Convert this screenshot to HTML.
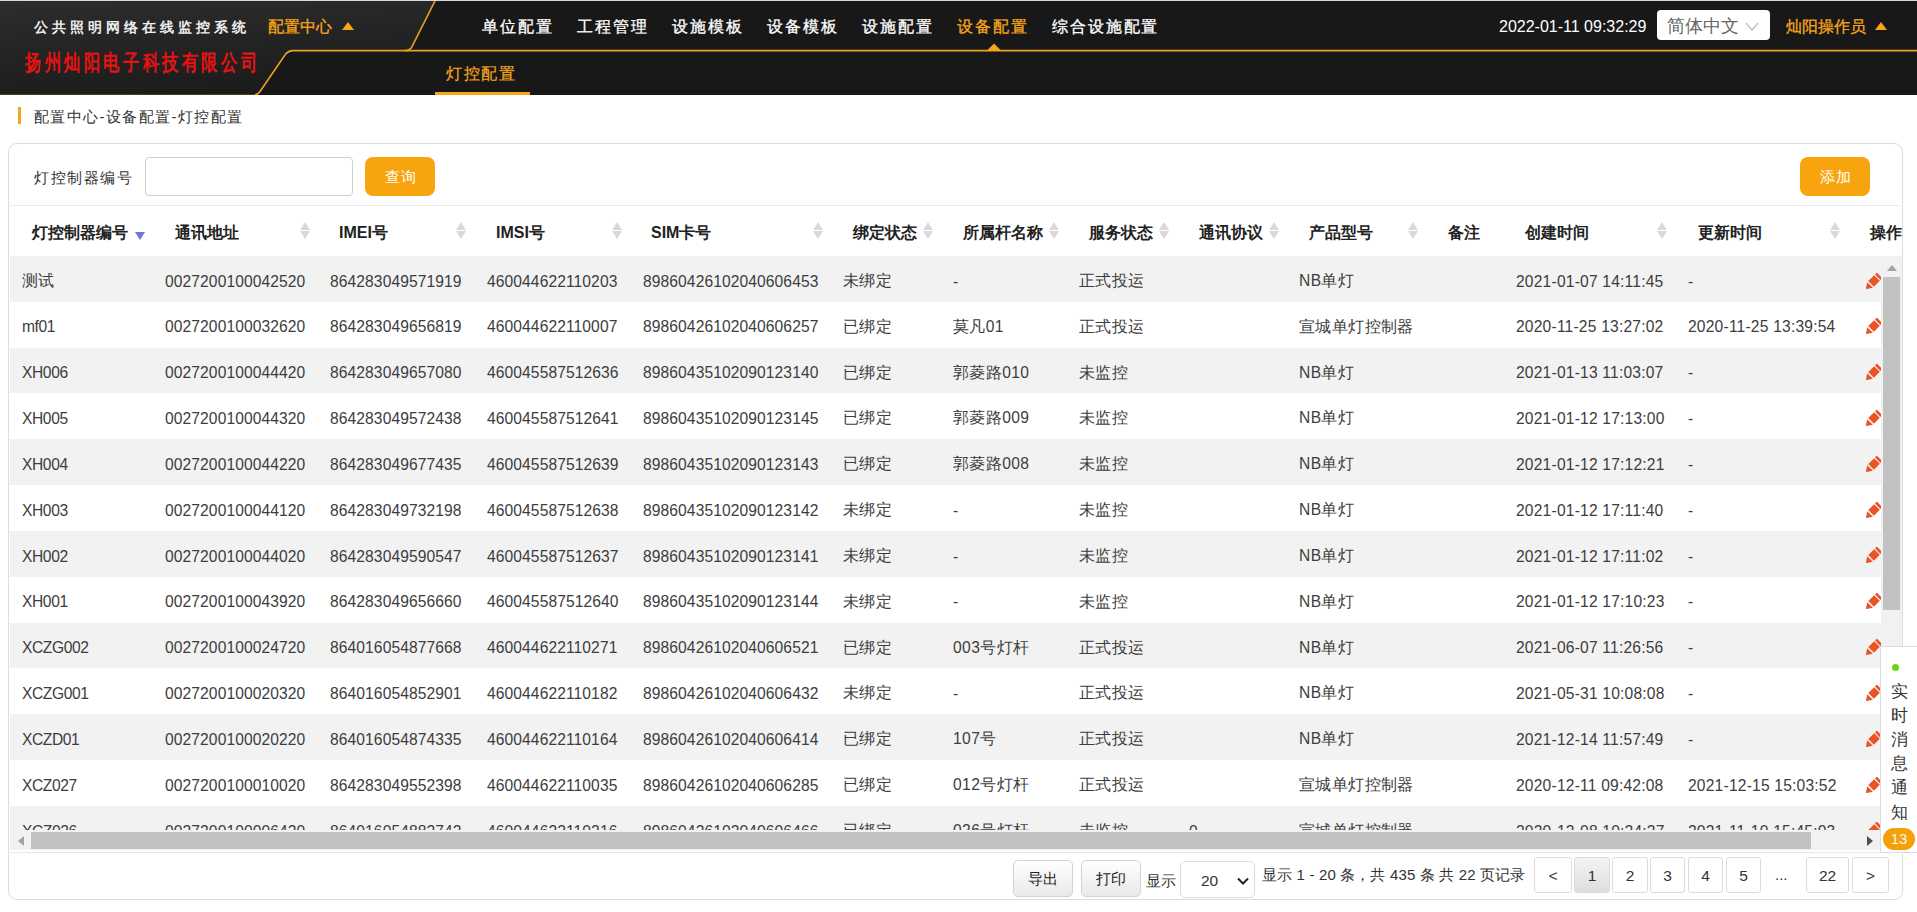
<!DOCTYPE html><html><head><meta charset="utf-8"><style>*{margin:0;padding:0;box-sizing:border-box}
html,body{width:1917px;height:912px;overflow:hidden;background:#fff;font-family:"Liberation Sans",sans-serif;color:#333}
.abs{position:absolute;white-space:nowrap}
#topline{position:absolute;left:0;top:0;width:1917px;height:1px;background:#d9d9d9}
#hdr{position:absolute;left:0;top:1px;width:1917px;height:94px;background:#181818;overflow:hidden}
#hdr svg.bg{position:absolute;left:0;top:0}
.nav{position:absolute;top:15px;font-size:16px;color:#fff;line-height:22px;white-space:nowrap;letter-spacing:1.9px;-webkit-text-stroke:0.3px currentColor}
.nav.on{color:#f7a519}
#title{position:absolute;left:34px;top:17px;font-size:14px;color:#eee;font-weight:bold;letter-spacing:4px;font-family:"Liberation Serif",serif;line-height:20px}
#company{position:absolute;left:25px;top:49px;font-size:16px;color:#e81212;font-weight:bold;letter-spacing:3.6px;font-family:"Liberation Serif",serif;line-height:20px;transform:scaleY(1.35);transform-origin:0 0}
#cfg{position:absolute;left:268px;top:15px;font-size:16px;color:#f7a519;line-height:22px;-webkit-text-stroke:0.3px currentColor}
.tri{position:absolute;width:0;height:0;border-left:6px solid transparent;border-right:6px solid transparent;border-bottom:8px solid #f7a519}
#sub{position:absolute;left:446px;top:62px;font-size:16px;color:#f7a519;line-height:22px;letter-spacing:1.7px;-webkit-text-stroke:0.2px currentColor}
#subbar{position:absolute;left:435px;top:91px;width:95px;height:4px;background:#f7a519}
#clock{position:absolute;left:1499px;top:15px;font-size:16px;color:#fff;line-height:22px}
#lang{position:absolute;left:1657px;top:9px;width:113px;height:30px;background:#fff;border-radius:4px}
#lang span{position:absolute;left:10px;top:5px;font-size:18px;color:#666;line-height:22px}
#lang svg{position:absolute;left:88px;top:12px}
#user{position:absolute;left:1786px;top:15px;font-size:16px;color:#f7a519;line-height:22px;-webkit-text-stroke:0.3px currentColor}

#crumbbar{position:absolute;left:18px;top:107px;width:3px;height:17px;background:#f7a519}
#crumb{position:absolute;left:34px;top:106px;font-size:15px;color:#333;line-height:22px;letter-spacing:1.4px}

#box{position:absolute;left:8px;top:143px;width:1895px;height:757px;border:1px solid #dcdcdc;border-radius:9px;background:#fff}
#lbl{position:absolute;left:34px;top:167px;font-size:15px;color:#333;line-height:22px;letter-spacing:1.6px}
#inp{position:absolute;left:145px;top:157px;width:208px;height:39px;border:1px solid #cfcfcf;border-radius:4px;background:#fff}
.obtn{position:absolute;top:157px;width:70px;height:39px;background:#f8a40e;border-radius:8px;color:#fff;font-size:15px;line-height:39px;text-align:center;letter-spacing:1px;text-indent:1px}
#sep{position:absolute;left:10px;top:205px;width:1891px;height:1px;background:#ececec}

#tbl{position:absolute;left:0;top:0;width:1917px;height:912px}
.th{position:absolute;top:221.5px;font-size:16px;font-weight:bold;color:#222;line-height:22px;white-space:nowrap}
.sort{position:absolute;top:222px;width:10px;height:18px}
.sort i{position:absolute;left:0;width:0;height:0;border-left:5px solid transparent;border-right:5px solid transparent}
.sort i.up{top:0;border-bottom:8px solid #d9d9d9}
.sort i.dn{top:9px;border-top:8px solid #d9d9d9}
.sortdn{position:absolute;top:232px;width:0;height:0;border-left:5.5px solid transparent;border-right:5.5px solid transparent;border-top:8px solid #7374d8}
.row{position:absolute;left:10px;width:1871px;height:45.83px;overflow:hidden}
.row.g{background:#f2f2f2}
.td{position:absolute;top:14.6px;font-size:15.6px;color:#3d3d3d;line-height:22px;white-space:nowrap;margin-left:-10px;letter-spacing:0.1px}
.td.cj{letter-spacing:0.4px;top:14px}
.td.dt{letter-spacing:0.2px}
.td.lt{letter-spacing:-0.4px}
.penw{position:absolute;left:1852.2px;top:12.5px;width:24px;height:24px}
.pen{display:block}
#body{position:absolute;left:0;top:256px;width:1917px;height:574px;overflow:hidden}
#hsb{position:absolute;left:10px;top:830px;width:1871px;height:20px;background:#f1f1f1}
#hsb .th2{position:absolute;left:21px;top:2px;width:780px;height:17px;background:#c1c1c1}
#vsb{position:absolute;left:1881px;top:256px;width:21px;height:574px;background:#f1f1f1}
#vsb .th2{position:absolute;left:2px;top:21px;width:17px;height:333px;background:#c1c1c1}
#hline{position:absolute;left:10px;top:852px;width:1891px;height:1px;background:#e8e8e8}
#notice{position:absolute;left:1880px;top:646px;width:40px;height:207px;background:#fff;border:1px solid #dcdcdc;border-right:none}
#notice .dot{position:absolute;left:11px;top:17px;width:7px;height:7px;border-radius:50%;background:#6bd80f}
#notice .txt{position:absolute;left:10px;top:31.6px;width:18px;font-size:16.5px;line-height:24.2px;color:#333;white-space:normal;word-break:break-all}
#notice .badge{position:absolute;left:2px;top:181px;width:32px;height:21.5px;border-radius:11px;background:#f59f0a;color:#fff8ea;font-size:15px;line-height:22px;text-align:center}
.gbtn{position:absolute;top:860px;width:60px;height:37px;border:1px solid #d2d2d2;border-radius:5px;background:linear-gradient(#fff,#e9e9e9);font-size:15px;color:#222;line-height:35px;text-align:center}
#show{position:absolute;left:1146px;top:870px;font-size:15px;color:#333;line-height:22px}
#sel{position:absolute;left:1180px;top:861px;width:75px;height:37px;border:1px solid #dcdcdc;border-radius:5px;background:#fff}
#sel span{position:absolute;left:20px;top:8px;font-size:15.5px;color:#333;line-height:22px}
#sel svg{position:absolute;left:56px;top:15px}
#info{position:absolute;left:1262px;top:864px;font-size:15px;color:#333;line-height:22px;letter-spacing:0.15px}
.pg{position:absolute;top:857px;height:36px;border:1px solid #dcdcdc;border-radius:3px;background:#fff;font-size:15.5px;color:#333;line-height:35px;text-align:center}
.pg.cur{background:linear-gradient(#f4f4f4,#dedede)}
#dots{position:absolute;left:1775px;top:864px;font-size:15px;color:#333;line-height:22px}
</style></head><body>
<div id="topline"></div>
<div id="hdr">
<svg class="bg" width="1917" height="94" viewBox="0 1 1917 94">
<defs><linearGradient id="lg" x1="0" y1="0" x2="0.3" y2="1"><stop offset="0" stop-color="#2d2d2d"/><stop offset="1" stop-color="#1c1c1c"/></linearGradient></defs>
<path d="M0 1 L435 1 L412 46.6 Q410 50.6 405 50.6 L293 50.6 Q289 50.6 286 53.6 L259 95 L0 95Z" fill="url(#lg)"/>
<path d="M435.5 0 L412 46.6 Q410 50.6 405 50.6" fill="none" stroke="#e8a023" stroke-width="1.6"/>
<path d="M255 94.7 Q258 94.5 260 91.5 L286 53.6 Q289 50.6 293 50.6 L1917 50.6" fill="none" stroke="#e8a023" stroke-width="1.6"/><path d="M0 94.8 L255 94.8" fill="none" stroke="#e8a023" stroke-opacity="0.35" stroke-width="1"/>
<path d="M987 50.6 L994 43.6 L1001 50.6Z" fill="#f7a519"/>
</svg>
<div id="title">公共照明网络在线监控系统</div>
<div id="company">扬州灿阳电子科技有限公司</div>
<div id="cfg">配置中心</div>
<div class="tri" style="left:342px;top:21px"></div>
<div class="nav" style="left:482px">单位配置</div>
<div class="nav" style="left:577px">工程管理</div>
<div class="nav" style="left:672px">设施模板</div>
<div class="nav" style="left:767px">设备模板</div>
<div class="nav" style="left:862px">设施配置</div>
<div class="nav on" style="left:957px">设备配置</div>
<div class="nav" style="left:1052px">综合设施配置</div>
<div id="sub">灯控配置</div>
<div id="subbar"></div>
<div id="clock">2022-01-11 09:32:29</div>
<div id="lang"><span>简体中文</span><svg width="14" height="9" viewBox="0 0 14 9"><path d="M1 1 L7 8 L13 1" fill="none" stroke="#bbb" stroke-width="1.2"/></svg></div>
<div id="user">灿阳操作员</div>
<div class="tri" style="left:1875px;top:21px"></div>
</div>
<div id="crumbbar"></div>
<div id="crumb">配置中心-设备配置-灯控配置</div>
<div id="box"></div>
<div id="lbl">灯控制器编号</div>
<div id="inp"></div>
<div class="obtn" style="left:365px">查询</div>
<div class="obtn" style="left:1800px">添加</div>
<div id="sep"></div>

<div id="tbl">
<div class="th" style="left:32px">灯控制器编号</div>
<div class="th" style="left:175px">通讯地址</div>
<div class="sort" style="left:300px"><i class="up"></i><i class="dn"></i></div>
<div class="th" style="left:339px">IMEI号</div>
<div class="sort" style="left:456px"><i class="up"></i><i class="dn"></i></div>
<div class="th" style="left:496px">IMSI号</div>
<div class="sort" style="left:612px"><i class="up"></i><i class="dn"></i></div>
<div class="th" style="left:651px">SIM卡号</div>
<div class="sort" style="left:813px"><i class="up"></i><i class="dn"></i></div>
<div class="th" style="left:853px">绑定状态</div>
<div class="sort" style="left:923px"><i class="up"></i><i class="dn"></i></div>
<div class="th" style="left:963px">所属杆名称</div>
<div class="sort" style="left:1049px"><i class="up"></i><i class="dn"></i></div>
<div class="th" style="left:1089px">服务状态</div>
<div class="sort" style="left:1159px"><i class="up"></i><i class="dn"></i></div>
<div class="th" style="left:1199px">通讯协议</div>
<div class="sort" style="left:1269px"><i class="up"></i><i class="dn"></i></div>
<div class="th" style="left:1309px">产品型号</div>
<div class="sort" style="left:1408px"><i class="up"></i><i class="dn"></i></div>
<div class="th" style="left:1448px">备注</div>
<div class="th" style="left:1525px">创建时间</div>
<div class="sort" style="left:1657px"><i class="up"></i><i class="dn"></i></div>
<div class="th" style="left:1698px">更新时间</div>
<div class="sort" style="left:1830px"><i class="up"></i><i class="dn"></i></div>
<div class="th" style="left:1870px">操作</div>
<div class="sortdn" style="left:135px"></div>
<div id="body">
<div class="row g" style="top:0.00px">
<span class="td cj" style="left:22px">测试</span>
<span class="td" style="left:165px">0027200100042520</span>
<span class="td" style="left:330px">864283049571919</span>
<span class="td" style="left:487px">460044622110203</span>
<span class="td" style="left:643px">89860426102040606453</span>
<span class="td cj" style="left:843px">未绑定</span>
<span class="td" style="left:953px">-</span>
<span class="td cj" style="left:1079px">正式投运</span>
<span class="td cj" style="left:1299px">NB单灯</span>
<span class="td dt" style="left:1516px">2021-01-07 14:11:45</span>
<span class="td" style="left:1688px">-</span>
<span class="penw"><svg class="pen" width="24" height="24" viewBox="0 0 24 24"><g transform="translate(12 12) rotate(45)" fill="#ea5424"><rect x="-4" y="-8" width="8" height="2.7" rx="0.6"/><rect x="-4" y="-4.2" width="8" height="8.3"/><path d="M-4 5.6 L4 5.6 L0.4 11 L-0.4 11Z"/></g></svg></span>
</div>
<div class="row" style="top:45.83px">
<span class="td lt" style="left:22px">mf01</span>
<span class="td" style="left:165px">0027200100032620</span>
<span class="td" style="left:330px">864283049656819</span>
<span class="td" style="left:487px">460044622110007</span>
<span class="td" style="left:643px">89860426102040606257</span>
<span class="td cj" style="left:843px">已绑定</span>
<span class="td cj" style="left:953px">莫凡01</span>
<span class="td cj" style="left:1079px">正式投运</span>
<span class="td cj" style="left:1299px">宣城单灯控制器</span>
<span class="td dt" style="left:1516px">2020-11-25 13:27:02</span>
<span class="td dt" style="left:1688px">2020-11-25 13:39:54</span>
<span class="penw"><svg class="pen" width="24" height="24" viewBox="0 0 24 24"><g transform="translate(12 12) rotate(45)" fill="#ea5424"><rect x="-4" y="-8" width="8" height="2.7" rx="0.6"/><rect x="-4" y="-4.2" width="8" height="8.3"/><path d="M-4 5.6 L4 5.6 L0.4 11 L-0.4 11Z"/></g></svg></span>
</div>
<div class="row g" style="top:91.66px">
<span class="td lt" style="left:22px">XH006</span>
<span class="td" style="left:165px">0027200100044420</span>
<span class="td" style="left:330px">864283049657080</span>
<span class="td" style="left:487px">460045587512636</span>
<span class="td" style="left:643px">89860435102090123140</span>
<span class="td cj" style="left:843px">已绑定</span>
<span class="td cj" style="left:953px">郭菱路010</span>
<span class="td cj" style="left:1079px">未监控</span>
<span class="td cj" style="left:1299px">NB单灯</span>
<span class="td dt" style="left:1516px">2021-01-13 11:03:07</span>
<span class="td" style="left:1688px">-</span>
<span class="penw"><svg class="pen" width="24" height="24" viewBox="0 0 24 24"><g transform="translate(12 12) rotate(45)" fill="#ea5424"><rect x="-4" y="-8" width="8" height="2.7" rx="0.6"/><rect x="-4" y="-4.2" width="8" height="8.3"/><path d="M-4 5.6 L4 5.6 L0.4 11 L-0.4 11Z"/></g></svg></span>
</div>
<div class="row" style="top:137.49px">
<span class="td lt" style="left:22px">XH005</span>
<span class="td" style="left:165px">0027200100044320</span>
<span class="td" style="left:330px">864283049572438</span>
<span class="td" style="left:487px">460045587512641</span>
<span class="td" style="left:643px">89860435102090123145</span>
<span class="td cj" style="left:843px">已绑定</span>
<span class="td cj" style="left:953px">郭菱路009</span>
<span class="td cj" style="left:1079px">未监控</span>
<span class="td cj" style="left:1299px">NB单灯</span>
<span class="td dt" style="left:1516px">2021-01-12 17:13:00</span>
<span class="td" style="left:1688px">-</span>
<span class="penw"><svg class="pen" width="24" height="24" viewBox="0 0 24 24"><g transform="translate(12 12) rotate(45)" fill="#ea5424"><rect x="-4" y="-8" width="8" height="2.7" rx="0.6"/><rect x="-4" y="-4.2" width="8" height="8.3"/><path d="M-4 5.6 L4 5.6 L0.4 11 L-0.4 11Z"/></g></svg></span>
</div>
<div class="row g" style="top:183.32px">
<span class="td lt" style="left:22px">XH004</span>
<span class="td" style="left:165px">0027200100044220</span>
<span class="td" style="left:330px">864283049677435</span>
<span class="td" style="left:487px">460045587512639</span>
<span class="td" style="left:643px">89860435102090123143</span>
<span class="td cj" style="left:843px">已绑定</span>
<span class="td cj" style="left:953px">郭菱路008</span>
<span class="td cj" style="left:1079px">未监控</span>
<span class="td cj" style="left:1299px">NB单灯</span>
<span class="td dt" style="left:1516px">2021-01-12 17:12:21</span>
<span class="td" style="left:1688px">-</span>
<span class="penw"><svg class="pen" width="24" height="24" viewBox="0 0 24 24"><g transform="translate(12 12) rotate(45)" fill="#ea5424"><rect x="-4" y="-8" width="8" height="2.7" rx="0.6"/><rect x="-4" y="-4.2" width="8" height="8.3"/><path d="M-4 5.6 L4 5.6 L0.4 11 L-0.4 11Z"/></g></svg></span>
</div>
<div class="row" style="top:229.15px">
<span class="td lt" style="left:22px">XH003</span>
<span class="td" style="left:165px">0027200100044120</span>
<span class="td" style="left:330px">864283049732198</span>
<span class="td" style="left:487px">460045587512638</span>
<span class="td" style="left:643px">89860435102090123142</span>
<span class="td cj" style="left:843px">未绑定</span>
<span class="td" style="left:953px">-</span>
<span class="td cj" style="left:1079px">未监控</span>
<span class="td cj" style="left:1299px">NB单灯</span>
<span class="td dt" style="left:1516px">2021-01-12 17:11:40</span>
<span class="td" style="left:1688px">-</span>
<span class="penw"><svg class="pen" width="24" height="24" viewBox="0 0 24 24"><g transform="translate(12 12) rotate(45)" fill="#ea5424"><rect x="-4" y="-8" width="8" height="2.7" rx="0.6"/><rect x="-4" y="-4.2" width="8" height="8.3"/><path d="M-4 5.6 L4 5.6 L0.4 11 L-0.4 11Z"/></g></svg></span>
</div>
<div class="row g" style="top:274.98px">
<span class="td lt" style="left:22px">XH002</span>
<span class="td" style="left:165px">0027200100044020</span>
<span class="td" style="left:330px">864283049590547</span>
<span class="td" style="left:487px">460045587512637</span>
<span class="td" style="left:643px">89860435102090123141</span>
<span class="td cj" style="left:843px">未绑定</span>
<span class="td" style="left:953px">-</span>
<span class="td cj" style="left:1079px">未监控</span>
<span class="td cj" style="left:1299px">NB单灯</span>
<span class="td dt" style="left:1516px">2021-01-12 17:11:02</span>
<span class="td" style="left:1688px">-</span>
<span class="penw"><svg class="pen" width="24" height="24" viewBox="0 0 24 24"><g transform="translate(12 12) rotate(45)" fill="#ea5424"><rect x="-4" y="-8" width="8" height="2.7" rx="0.6"/><rect x="-4" y="-4.2" width="8" height="8.3"/><path d="M-4 5.6 L4 5.6 L0.4 11 L-0.4 11Z"/></g></svg></span>
</div>
<div class="row" style="top:320.81px">
<span class="td lt" style="left:22px">XH001</span>
<span class="td" style="left:165px">0027200100043920</span>
<span class="td" style="left:330px">864283049656660</span>
<span class="td" style="left:487px">460045587512640</span>
<span class="td" style="left:643px">89860435102090123144</span>
<span class="td cj" style="left:843px">未绑定</span>
<span class="td" style="left:953px">-</span>
<span class="td cj" style="left:1079px">未监控</span>
<span class="td cj" style="left:1299px">NB单灯</span>
<span class="td dt" style="left:1516px">2021-01-12 17:10:23</span>
<span class="td" style="left:1688px">-</span>
<span class="penw"><svg class="pen" width="24" height="24" viewBox="0 0 24 24"><g transform="translate(12 12) rotate(45)" fill="#ea5424"><rect x="-4" y="-8" width="8" height="2.7" rx="0.6"/><rect x="-4" y="-4.2" width="8" height="8.3"/><path d="M-4 5.6 L4 5.6 L0.4 11 L-0.4 11Z"/></g></svg></span>
</div>
<div class="row g" style="top:366.64px">
<span class="td lt" style="left:22px">XCZG002</span>
<span class="td" style="left:165px">0027200100024720</span>
<span class="td" style="left:330px">864016054877668</span>
<span class="td" style="left:487px">460044622110271</span>
<span class="td" style="left:643px">89860426102040606521</span>
<span class="td cj" style="left:843px">已绑定</span>
<span class="td cj" style="left:953px">003号灯杆</span>
<span class="td cj" style="left:1079px">正式投运</span>
<span class="td cj" style="left:1299px">NB单灯</span>
<span class="td dt" style="left:1516px">2021-06-07 11:26:56</span>
<span class="td" style="left:1688px">-</span>
<span class="penw"><svg class="pen" width="24" height="24" viewBox="0 0 24 24"><g transform="translate(12 12) rotate(45)" fill="#ea5424"><rect x="-4" y="-8" width="8" height="2.7" rx="0.6"/><rect x="-4" y="-4.2" width="8" height="8.3"/><path d="M-4 5.6 L4 5.6 L0.4 11 L-0.4 11Z"/></g></svg></span>
</div>
<div class="row" style="top:412.47px">
<span class="td lt" style="left:22px">XCZG001</span>
<span class="td" style="left:165px">0027200100020320</span>
<span class="td" style="left:330px">864016054852901</span>
<span class="td" style="left:487px">460044622110182</span>
<span class="td" style="left:643px">89860426102040606432</span>
<span class="td cj" style="left:843px">未绑定</span>
<span class="td" style="left:953px">-</span>
<span class="td cj" style="left:1079px">正式投运</span>
<span class="td cj" style="left:1299px">NB单灯</span>
<span class="td dt" style="left:1516px">2021-05-31 10:08:08</span>
<span class="td" style="left:1688px">-</span>
<span class="penw"><svg class="pen" width="24" height="24" viewBox="0 0 24 24"><g transform="translate(12 12) rotate(45)" fill="#ea5424"><rect x="-4" y="-8" width="8" height="2.7" rx="0.6"/><rect x="-4" y="-4.2" width="8" height="8.3"/><path d="M-4 5.6 L4 5.6 L0.4 11 L-0.4 11Z"/></g></svg></span>
</div>
<div class="row g" style="top:458.30px">
<span class="td lt" style="left:22px">XCZD01</span>
<span class="td" style="left:165px">0027200100020220</span>
<span class="td" style="left:330px">864016054874335</span>
<span class="td" style="left:487px">460044622110164</span>
<span class="td" style="left:643px">89860426102040606414</span>
<span class="td cj" style="left:843px">已绑定</span>
<span class="td cj" style="left:953px">107号</span>
<span class="td cj" style="left:1079px">正式投运</span>
<span class="td cj" style="left:1299px">NB单灯</span>
<span class="td dt" style="left:1516px">2021-12-14 11:57:49</span>
<span class="td" style="left:1688px">-</span>
<span class="penw"><svg class="pen" width="24" height="24" viewBox="0 0 24 24"><g transform="translate(12 12) rotate(45)" fill="#ea5424"><rect x="-4" y="-8" width="8" height="2.7" rx="0.6"/><rect x="-4" y="-4.2" width="8" height="8.3"/><path d="M-4 5.6 L4 5.6 L0.4 11 L-0.4 11Z"/></g></svg></span>
</div>
<div class="row" style="top:504.13px">
<span class="td lt" style="left:22px">XCZ027</span>
<span class="td" style="left:165px">0027200100010020</span>
<span class="td" style="left:330px">864283049552398</span>
<span class="td" style="left:487px">460044622110035</span>
<span class="td" style="left:643px">89860426102040606285</span>
<span class="td cj" style="left:843px">已绑定</span>
<span class="td cj" style="left:953px">012号灯杆</span>
<span class="td cj" style="left:1079px">正式投运</span>
<span class="td cj" style="left:1299px">宣城单灯控制器</span>
<span class="td dt" style="left:1516px">2020-12-11 09:42:08</span>
<span class="td dt" style="left:1688px">2021-12-15 15:03:52</span>
<span class="penw"><svg class="pen" width="24" height="24" viewBox="0 0 24 24"><g transform="translate(12 12) rotate(45)" fill="#ea5424"><rect x="-4" y="-8" width="8" height="2.7" rx="0.6"/><rect x="-4" y="-4.2" width="8" height="8.3"/><path d="M-4 5.6 L4 5.6 L0.4 11 L-0.4 11Z"/></g></svg></span>
</div>
<div class="row g" style="top:549.96px">
<span class="td lt" style="left:22px">XCZ026</span>
<span class="td" style="left:165px">0027200100006420</span>
<span class="td" style="left:330px">864016054882742</span>
<span class="td" style="left:487px">460044622110216</span>
<span class="td" style="left:643px">89860426102040606466</span>
<span class="td cj" style="left:843px">已绑定</span>
<span class="td cj" style="left:953px">026号灯杆</span>
<span class="td cj" style="left:1079px">未监控</span>
<span class="td" style="left:1189px">0</span>
<span class="td cj" style="left:1299px">宣城单灯控制器</span>
<span class="td dt" style="left:1516px">2020-12-08 10:24:27</span>
<span class="td dt" style="left:1688px">2021-11-10 15:45:03</span>
<span class="penw"><svg class="pen" width="24" height="24" viewBox="0 0 24 24"><g transform="translate(12 12) rotate(45)" fill="#ea5424"><rect x="-4" y="-8" width="8" height="2.7" rx="0.6"/><rect x="-4" y="-4.2" width="8" height="8.3"/><path d="M-4 5.6 L4 5.6 L0.4 11 L-0.4 11Z"/></g></svg></span>
</div>
</div>
</div>
<div id="hsb"><svg style="position:absolute;left:8px;top:6px" width="6" height="10"><path d="M6 0 L0 5 L6 10Z" fill="#a3a3a3"/></svg><div class="th2" style="left:21px;width:1780px"></div><svg style="position:absolute;left:1857px;top:6px" width="6" height="10"><path d="M0 0 L6 5 L0 10Z" fill="#505050"/></svg></div>
<div id="vsb"><svg style="position:absolute;left:6px;top:9px" width="10" height="6"><path d="M0 6 L5 0 L10 6Z" fill="#a3a3a3"/></svg><div class="th2"></div></div>
<div id="hline"></div>
<div id="notice"><div class="dot"></div><div class="txt">实时消息通知</div><div class="badge">13</div></div>
<div class="gbtn" style="left:1013px">导出</div>
<div class="gbtn" style="left:1081px">打印</div>
<div id="show">显示</div>
<div id="sel"><span>20</span><svg width="12" height="8" viewBox="0 0 12 8"><path d="M1 1.5 L6 6.5 L11 1.5" fill="none" stroke="#222" stroke-width="2"/></svg></div>
<div id="info">显示 1 - 20 条，共 435 条 共 22 页记录</div>
<div class="pg" style="left:1534px;width:38px">&lt;</div>
<div class="pg cur" style="left:1574px;width:36px">1</div>
<div class="pg" style="left:1612px;width:36px">2</div>
<div class="pg" style="left:1650px;width:35px">3</div>
<div class="pg" style="left:1688px;width:35px">4</div>
<div class="pg" style="left:1726px;width:35px">5</div>
<div id="dots">...</div>
<div class="pg" style="left:1806px;width:43px">22</div>
<div class="pg" style="left:1852px;width:37px">&gt;</div>

</body></html>
